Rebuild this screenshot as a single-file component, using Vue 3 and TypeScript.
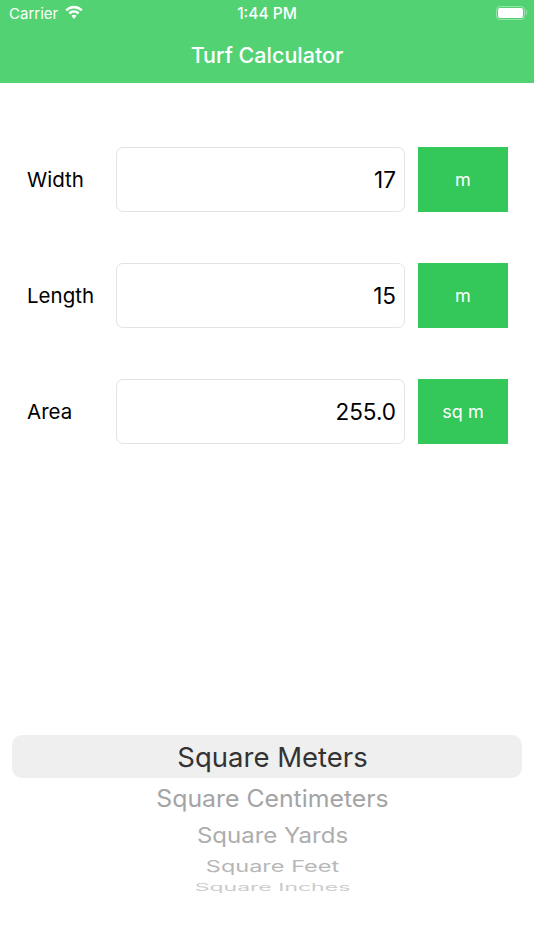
<script setup lang="ts">
const rows = [
  { label: 'Width', value: '17', unit: 'm' },
  { label: 'Length', value: '15', unit: 'm' },
  { label: 'Area', value: '255.0', unit: 'sq m' },
]
const options = [
  { text: 'Square Centimeters', cls: 'o1' },
  { text: 'Square Yards', cls: 'o2' },
  { text: 'Square Feet', cls: 'o3' },
  { text: 'Square Inches', cls: 'o4' },
]
</script>

<template>
  <div class="page">
    <header class="header">
      <div class="status">
        <div class="status-left">
          <span class="carrier">Carrier</span>
          <svg class="wifi" width="20" height="15" viewBox="0 0 18 13">
            <path d="M9 2.800c2.500 0 4.700 1 6.300 2.600l1.500-1.600C14.700 1.700 12 .4 9 .4S3.300 1.700 1.200 3.800l1.500 1.600C4.300 3.800 6.500 2.800 9 2.800z" fill="#fff"/>
            <path d="M9 6.800c1.300 0 2.500.5 3.400 1.400l1.500-1.600C12.600 5.300 10.900 4.500 9 4.500s-3.600.8-4.900 2.100l1.500 1.600C6.500 7.300 7.700 6.800 9 6.800z" fill="#fff"/>
            <path d="M9 8.500c-.9 0-1.700.4-2.300 1L9 12.400l2.300-2.900c-.6-.6-1.400-1-2.300-1z" fill="#fff"/>
          </svg>
        </div>
        <span class="time">1:44 PM</span>
        <div class="battery"><span class="battery-fill"></span></div>
      </div>
      <h1 class="title">Turf Calculator</h1>
    </header>

    <main class="form">
      <div v-for="row in rows" :key="row.label" class="row">
        <span class="label">{{ row.label }}</span>
        <div class="field">{{ row.value }}</div>
        <div class="unit">{{ row.unit }}</div>
      </div>
    </main>

    <section class="picker">
      <div class="selected">Square Meters</div>
      <div v-for="o in options" :key="o.text" class="option" :class="o.cls">{{ o.text }}</div>
    </section>
  </div>
</template>

<style scoped>
.page {
  width: 534px;
  height: 950px;
  background: #fff;
  display: flex;
  flex-direction: column;
  overflow: hidden;
  font-family: Inter, "Liberation Sans", sans-serif;
  color: #000;
}
.header {
  height: 83px;
  background: #52d273;
  color: #fff;
  flex: none;
}
.status {
  height: 27px;
  padding: 0 9.5px 0 9px;
  display: flex;
  align-items: center;
  justify-content: space-between;
  position: relative;
}
.status-left {
  display: flex;
  align-items: center;
  gap: 6px;
}
.carrier {
  font-size: 15px;
}
.wifi {
  margin-top: -2px;
}
.time {
  position: absolute;
  left: 0;
  right: 0;
  text-align: center;
  font-size: 15.5px;
  font-weight: 500;
}
.battery {
  width: 29px;
  height: 14px;
  margin-top: -1px;
  border: 1.5px solid rgba(255, 255, 255, 0.4);
  border-radius: 4px;
  padding: 1px;
  box-sizing: border-box;
  position: relative;
}
.battery::after {
  content: "";
  position: absolute;
  right: -3.5px;
  top: 3px;
  width: 1.5px;
  height: 5px;
  border-radius: 0 2px 2px 0;
  background: rgba(255, 255, 255, 0.4);
}
.battery-fill {
  display: block;
  height: 100%;
  background: #fff;
  border-radius: 2px;
}
.title {
  margin: 0;
  padding-top: 13px;
  text-align: center;
  font-size: 21.5px;
  font-weight: 500;
  line-height: 30px;
}
.form {
  padding: 64px 26px 0 27px;
  display: flex;
  flex-direction: column;
  gap: 51px;
}
.row {
  display: flex;
  align-items: center;
  height: 65px;
}
.label {
  width: 89px;
  flex: none;
  font-size: 20.5px;
}
.field {
  width: 289px;
  height: 65px;
  flex: none;
  box-sizing: border-box;
  border: 1px solid #e3e3e3;
  border-radius: 7px;
  display: flex;
  align-items: center;
  justify-content: flex-end;
  padding-right: 8px;
  font-size: 22.5px;
}
.unit {
  width: 90px;
  height: 65px;
  margin-left: 13px;
  flex: none;
  background: #34c759;
  color: #fff;
  display: flex;
  align-items: center;
  justify-content: center;
  font-size: 18px;
}
.picker {
  margin-top: auto;
  margin-bottom: 54px;
  padding: 0 12px;
  display: flex;
  flex-direction: column;
  align-items: stretch;
}
.selected {
  height: 43px;
  border-radius: 10px;
  background: #efefef;
  color: #333;
  font-size: 27.5px;
  line-height: 45px;
  text-align: center;
  padding-left: 11px;
}
.option {
  text-align: center;
  white-space: nowrap;
  padding-left: 11px;
}
.o1 {
  height: 40px;
  line-height: 40px;
  font-size: 24.8px;
  color: #a4a4a4;
  transform: scaleY(0.96);
}
.o2 {
  height: 36px;
  line-height: 36px;
  font-size: 24px;
  color: #adadad;
  transform: scaleY(0.88);
}
.o3 {
  height: 25px;
  line-height: 25px;
  font-size: 23.5px;
  color: #b7b7b7;
  transform: scaleY(0.68);
}
.o4 {
  height: 17px;
  line-height: 17px;
  font-size: 23px;
  color: #cccccc;
  transform: scaleY(0.44);
}
</style>
